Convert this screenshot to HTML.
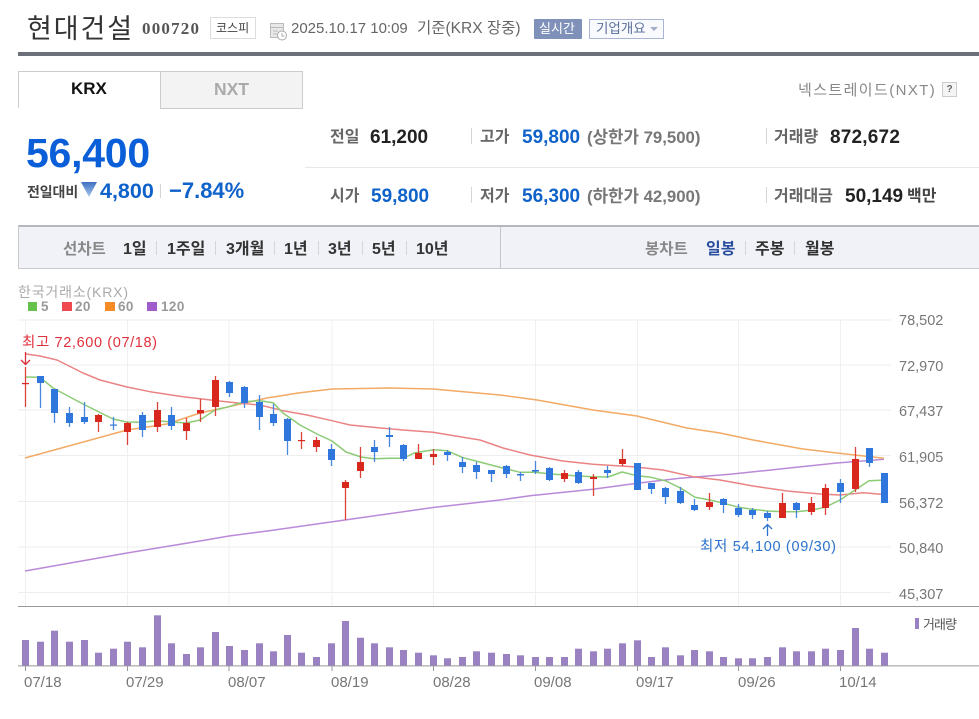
<!DOCTYPE html>
<html lang="ko"><head><meta charset="utf-8"><title>현대건설</title>
<style>
html,body{margin:0;padding:0;background:#fff;}
body{width:979px;height:719px;overflow:hidden;position:relative;font-family:"Liberation Sans","Noto Sans CJK KR",sans-serif;}
.t{position:absolute;white-space:nowrap;line-height:20px;height:20px;filter:blur(.3px);}
.b{font-weight:700;}
.box{position:absolute;box-sizing:border-box;}
.g{color:#666;font-weight:700;font-size:16px;}
.blue{color:#0f62c9;font-weight:700;font-size:19px;}
.dark{color:#222;font-weight:700;font-size:19px;}
.lim{color:#777;font-weight:700;font-size:16.800px;}
.m{color:#333;font-weight:700;font-size:16px;}
.sep{position:absolute;width:1px;background:#d5d5d5;}
</style></head><body>

<span class="t" style="left:27px;top:19px;font-size:27px;color:#333;letter-spacing:1.900px;">현대건설</span>
<span class="t b" style="left:142px;top:19px;font-size:17px;color:#555;letter-spacing:1.200px;font-family:'Liberation Serif','Noto Serif CJK SC',serif;">000720</span>
<div class="box" style="left:210px;top:17px;width:46px;height:22px;border:1px solid #ddd;"></div>
<span class="t" style="left:216px;top:18px;font-size:12px;color:#444;">코스피</span>
<svg style="position:absolute;left:270px;top:23px" width="18" height="18" viewBox="0 0 18 18"><rect x=".5" y=".5" width="13" height="14" fill="#e8e8e8" stroke="#bbb"/><path d="M1 4.500h12M3 8h5M3 11h4" stroke="#bbb"/><circle cx="12" cy="12.500" r="4.500" fill="#fff" stroke="#aaa"/><path d="M12 10v3h2.500" stroke="#aaa" fill="none"/></svg>
<span class="t" style="left:291px;top:19px;font-size:15px;color:#666;">2025.10.17 10:09</span>
<span class="t" style="left:417px;top:19px;font-size:15.500px;color:#666;">기준(KRX 장중)</span>
<div class="box" style="left:534px;top:19px;width:48px;height:20px;background:#8091b9;border-radius:1px;"></div>
<span class="t" style="left:539px;top:19px;font-size:13px;color:#fff;">실시간</span>
<div class="box" style="left:589px;top:19px;width:75px;height:20px;background:#f8fafd;border:1px solid #a9b5d2;"></div>
<span class="t" style="left:596px;top:19px;font-size:13.500px;color:#5a6f9c;">기업개요</span>
<svg style="position:absolute;left:649px;top:26px" width="10" height="6"><path d="M1 1h8L5 5z" fill="#a3aec6"/></svg>

<div class="box" style="left:18px;top:52px;width:961px;height:4px;background:#6c7078;"></div>

<div class="box" style="left:18px;top:71px;width:143px;height:37px;background:#fff;border:1px solid #ccc;border-bottom:0;"></div>
<div class="box" style="left:160px;top:71px;width:143px;height:38px;background:#f3f3f3;border:1px solid #ccc;"></div>
<span class="t b" style="left:71px;top:79px;font-size:17px;color:#111;">KRX</span>
<span class="t b" style="left:214px;top:79px;font-size:17.500px;color:#aaa;">NXT</span>
<span class="t" style="left:798px;top:81px;font-size:15px;color:#888;letter-spacing:1.400px;">넥스트레이드(NXT)</span>
<div class="box" style="left:942px;top:82px;width:15px;height:15px;background:#f4f4f4;border:1px solid #ccc;font:bold 10px/13px 'Liberation Sans',sans-serif;color:#666;text-align:center;">?</div>

<span class="t b" style="left:26px;top:143px;font-size:41px;color:#0a5fd8;letter-spacing:-.25px;">56,400</span>
<span class="t b" style="left:27px;top:182px;font-size:14px;color:#444;letter-spacing:-.1px;">전일대비</span>
<svg style="position:absolute;left:81px;top:181px" width="17" height="17"><defs><linearGradient id="tg" x1="0" y1="0" x2="0" y2="1"><stop offset="0" stop-color="#3f6fc0"/><stop offset="1" stop-color="#a9c8ee"/></linearGradient></defs><path d="M0 1h16L8 16z" fill="url(#tg)"/></svg>
<span class="t b" style="left:100px;top:181px;font-size:21.500px;color:#0f62c9;">4,800</span>
<div class="sep" style="left:160px;top:184px;height:14px;"></div>
<span class="t b" style="left:169px;top:181px;font-size:22px;color:#0f62c9;">−7.84%</span>

<div class="box" style="left:305px;top:167px;width:674px;height:1px;background:#e8e8e8;"></div>
<span class="t g" style="left:330px;top:128px;">전일</span>
<span class="t dark" style="left:370px;top:128px;">61,200</span>
<div class="sep" style="left:471px;top:128px;height:16px;"></div>
<span class="t g" style="left:480px;top:128px;">고가</span>
<span class="t blue" style="left:522px;top:128px;">59,800</span>
<span class="t lim" style="left:587px;top:128px;">(상한가 79,500)</span>
<div class="sep" style="left:766px;top:128px;height:16px;"></div>
<span class="t g" style="left:774px;top:128px;">거래량</span>
<span class="t dark" style="left:830px;top:128px;letter-spacing:.2px;">872,672</span>

<span class="t g" style="left:330px;top:187px;">시가</span>
<span class="t blue" style="left:371px;top:187px;">59,800</span>
<div class="sep" style="left:471px;top:187px;height:16px;"></div>
<span class="t g" style="left:480px;top:187px;">저가</span>
<span class="t blue" style="left:522px;top:187px;">56,300</span>
<span class="t lim" style="left:587px;top:187px;">(하한가 42,900)</span>
<div class="sep" style="left:766px;top:187px;height:16px;"></div>
<span class="t g" style="left:774px;top:187px;">거래대금</span>
<span class="t dark" style="left:845px;top:187px;">50,149</span>
<span class="t g" style="left:907px;top:187px;color:#444;">백만</span>

<div class="box" style="left:18px;top:225px;width:961px;height:44px;background:#f0f2f7;border:1px solid #c8cad0;border-top:2px solid #b4b7be;border-right:0;"></div>
<div class="box" style="left:500px;top:227px;width:1px;height:41px;background:#c4c6cc;"></div>
<span class="t g" style="left:63px;top:240px;color:#888;font-size:15.500px;">선차트</span>
<span class="t m" style="left:123px;top:240px;">1일</span><div class="sep" style="left:156px;top:241px;height:14px;"></div>
<span class="t m" style="left:167px;top:240px;">1주일</span><div class="sep" style="left:215px;top:241px;height:14px;"></div>
<span class="t m" style="left:226px;top:240px;">3개월</span><div class="sep" style="left:274px;top:241px;height:14px;"></div>
<span class="t m" style="left:284px;top:240px;">1년</span><div class="sep" style="left:318px;top:241px;height:14px;"></div>
<span class="t m" style="left:328px;top:240px;">3년</span><div class="sep" style="left:362px;top:241px;height:14px;"></div>
<span class="t m" style="left:372px;top:240px;">5년</span><div class="sep" style="left:406px;top:241px;height:14px;"></div>
<span class="t m" style="left:416px;top:240px;">10년</span>
<span class="t g" style="left:645px;top:240px;color:#888;font-size:15.500px;">봉차트</span>
<span class="t m" style="left:706px;top:240px;color:#2b4f9f;">일봉</span><div class="sep" style="left:745px;top:241px;height:14px;"></div>
<span class="t m" style="left:755px;top:240px;">주봉</span><div class="sep" style="left:794px;top:241px;height:14px;"></div>
<span class="t m" style="left:805px;top:240px;">월봉</span>

<svg style="position:absolute;left:0;top:0;filter:blur(.35px)" width="979" height="719" viewBox="0 0 979 719">
<g font-family="'Liberation Sans','Noto Sans CJK KR',sans-serif">
<text x="18" y="297" font-size="14" fill="#aaa" textLength="110">한국거래소(KRX)</text>
<g font-size="13.500" font-weight="700" fill="#999" letter-spacing=".4">
<rect x="28" y="302" width="9" height="9" fill="#66c24c"/><text x="41" y="311">5</text>
<rect x="62" y="302" width="10" height="9" fill="#ee4a4f"/><text x="75" y="311">20</text>
<rect x="105" y="302" width="10" height="9" fill="#f58b25"/><text x="118" y="311">60</text>
<rect x="147" y="302" width="10" height="9" fill="#a05cc9"/><text x="161" y="311">120</text>
</g>
<path d="M18 320H891M18 365H891M18 410H891M18 455.500H891M18 501.500H891M18 547H891M18 592.500H891" stroke="#eee" fill="none"/>
<path d="M25.500 320V606M127.500 320V606M229 320V606M332 320V606M433.500 320V606M535.500 320V606M637.500 320V606M738.500 320V606M840.500 320V606" stroke="#f0f0f0" fill="none"/>
<g font-size="14.500" fill="#777">
<text x="899" y="325">78,502</text><text x="899" y="371">72,970</text><text x="899" y="416">67,437</text><text x="899" y="462">61,905</text><text x="899" y="508">56,372</text><text x="899" y="553">50,840</text><text x="899" y="599">45,307</text>
</g>
<g fill="none" stroke-width="1.500" stroke-linejoin="round">
<polyline stroke="#ba8ad9" points="25,571 127,553 200,541 229,536 270,530.600 345,520 433,507.500 500,500 530,495.700 593,489.300 637,483.300 680,478.300 730,474.300 787,468.300 837,463 884,459.300"/>
<polyline stroke="#f2aa64" points="25,458 127,430 167,424 200,413 229,406.700 267,398 300,392.700 332,389 390,388 433,389 500,395 537,400 593,410 637,416 687,428 720,433 753,440 803,449 837,453 884,458.300"/>
<polyline stroke="#ea8484" points="26,354 40,356 57,360 83,373 100,380 127,387 150,391.700 183,396.700 217,400.700 240,403.300 260,405 283,410.700 307,415 332,420.700 350,425 373,427.300 403,430 433,432.300 460,436.700 480,440 503,448 530,455 563,461 593,464.300 633,466.700 663,470 693,476.700 720,480 753,486 787,491 820,494 840,495 863,492.700 881,494.300"/>
<polyline stroke="#8ccb76" points="26,377 40,377.300 53,388 83,404 113,419 127,422 142,422.300 157,420.700 171,422 186,423 200,420 215,410 229,406.700 244,401.700 260,400.700 273,402.700 283,413 300,425 317,434 332,441 346,452 361,457 374,458.700 390,458.300 403,458.300 415,452.700 434,449.700 447,450.700 463,457.700 476,461 491,465 507,469 520,472.300 535,472.300 549,473.700 564,475 578,476 593,476.700 608,477 622,472 637,475.700 651,477.300 666,481 681,488.300 695,497.300 710,500 724,503.300 739,507.300 752,509.300 768,511 783,511.700 797,511.700 812,510 825,507.300 840,500 855,490 869,480.700 881,480.300"/>
</g>
<path stroke="#d9443a" stroke-width="1.300" fill="none" d="M25.500 367V407M98.500 414V432M127.500 422V445M157.500 402V432M186.500 418V440M200.500 399V422M215.500 376V416M301.500 432V449M316.500 437V452M345.500 480V520M360.500 447V478M418.500 444V459M433.500 449V465M564.500 470V482M593.500 474V496M622.500 449V466M709.500 493V510M782.500 493V518M811.500 497V515M825.500 484V515M855.500 447V492"/>
<path stroke="#4a86de" stroke-width="1.300" fill="none" d="M40.500 376V408M54.500 389V423M69.500 407V427M84.500 402V424M113.500 417V430M142.500 412V437M171.500 407V430M229.500 381V397M244.500 386V408M259.500 395V430M273.500 404V426M287.500 418V455M331.500 444V466M374.500 440V462M389.500 427V447M403.500 444V461M447.500 450V461M462.500 457V473M476.500 462V479M491.500 470V482M506.500 465V478M520.500 472V481M535.500 461V474M549.500 467V481M578.500 470V484M607.500 466V478M651.500 483V494M665.500 487V504M680.500 487V504M694.500 499V511M723.500 498V513M738.500 504V517M752.500 508V519M767.500 511V521M796.500 502V518M840.500 479V503M869.500 448V467"/>
<g fill="#d8281e">
<rect x="22" y="383" width="7" height="1.200"/><rect x="95" y="415" width="7" height="7"/><rect x="124" y="423" width="7" height="9"/><rect x="154" y="410" width="7" height="17"/><rect x="183" y="423" width="7" height="8"/><rect x="197" y="410" width="7" height="3.500"/><rect x="212" y="380" width="7" height="27"/><rect x="298" y="440" width="7" height="1.200"/><rect x="313" y="440" width="7" height="7"/><rect x="342" y="482" width="7" height="6"/><rect x="357" y="462" width="7" height="9"/><rect x="415" y="453" width="7" height="6"/><rect x="430" y="454" width="7" height="3"/><rect x="561" y="473" width="7" height="6"/><rect x="590" y="477" width="7" height="2"/><rect x="619" y="459" width="7" height="5"/><rect x="706" y="502" width="7" height="5"/><rect x="779" y="503" width="7" height="15"/><rect x="808" y="503" width="7" height="9"/><rect x="822" y="488" width="7" height="20"/><rect x="852" y="459" width="7" height="30"/>
</g>
<g fill="#2f76dd">
<rect x="37" y="376" width="7" height="7"/><rect x="51" y="389" width="7" height="24"/><rect x="66" y="413" width="7" height="10"/><rect x="81" y="417" width="7" height="5"/><rect x="110" y="424.500" width="7" height="1.200"/><rect x="139" y="415" width="7" height="15"/><rect x="168" y="415" width="7" height="11"/><rect x="226" y="382" width="7" height="11"/><rect x="241" y="387" width="7" height="16"/><rect x="256" y="402" width="7" height="15"/><rect x="270" y="414" width="7" height="9"/><rect x="284" y="419" width="7" height="22"/><rect x="328" y="449" width="7" height="11"/><rect x="371" y="447" width="7" height="5"/><rect x="386" y="435" width="7" height="2"/><rect x="400" y="445" width="7" height="14"/><rect x="444" y="452" width="7" height="3"/><rect x="459" y="462" width="7" height="5"/><rect x="473" y="465" width="7" height="7"/><rect x="488" y="470" width="7" height="4"/><rect x="503" y="466" width="7" height="8"/><rect x="517" y="474" width="7" height="1.500"/><rect x="532" y="470" width="7" height="1.500"/><rect x="546" y="468" width="7" height="12"/><rect x="575" y="472" width="7" height="11"/><rect x="604" y="470" width="7" height="3"/><rect x="634" y="463" width="7" height="27"/><rect x="648" y="483" width="7" height="6"/><rect x="662" y="488" width="7" height="9"/><rect x="677" y="491" width="7" height="12"/><rect x="691" y="505" width="7" height="5"/><rect x="720" y="499" width="7" height="6"/><rect x="735" y="508" width="7" height="7"/><rect x="749" y="510" width="7" height="5"/><rect x="764" y="513" width="7" height="5"/><rect x="793" y="503" width="7" height="7"/><rect x="837" y="483" width="7" height="9"/><rect x="866" y="448" width="7" height="15"/><rect x="881" y="473" width="7" height="30"/>
</g>
<text x="22" y="347" font-size="14.500" fill="#e0303c" textLength="135">최고 72,600 (07/18)</text>
<path d="M25.500 352V364M21 360L25.500 364.500L30 360" stroke="#d9303a" stroke-width="1.300" fill="none"/>
<text x="700" y="551" font-size="14.500" fill="#2a72cc" textLength="136">최저 54,100 (09/30)</text>
<path d="M767.500 536V525M763 529L767.500 524.500L772 529" stroke="#2a72cc" stroke-width="1.300" fill="none"/>
<path d="M18 606.500H979" stroke="#999"/>
<path d="M18 665.900H979" stroke="#999"/>
<path d="M25.500 666V671M127.500 666V671M229 666V671M332 666V671M433.500 666V671M535.500 666V671M637.500 666V671M738.500 666V671M840.500 666V671" stroke="#999"/>
<g fill="#9a82c2">
<rect x="22" y="640" width="7" height="25.500"/><rect x="37" y="641.700" width="7" height="23.800"/><rect x="51" y="630.700" width="7" height="34.800"/><rect x="66" y="641.700" width="7" height="23.800"/><rect x="81" y="640" width="7" height="25.500"/><rect x="95" y="652.700" width="7" height="12.800"/><rect x="110" y="648.700" width="7" height="16.800"/><rect x="124" y="641.700" width="7" height="23.800"/><rect x="139" y="647.300" width="7" height="18.200"/><rect x="154" y="615.300" width="7" height="50.200"/><rect x="168" y="643.300" width="7" height="22.200"/><rect x="183" y="654" width="7" height="11.500"/><rect x="197" y="647.300" width="7" height="18.200"/><rect x="212" y="632" width="7" height="33.500"/><rect x="226" y="646" width="7" height="19.500"/><rect x="241" y="650" width="7" height="15.500"/><rect x="256" y="643.300" width="7" height="22.200"/><rect x="270" y="651.300" width="7" height="14.200"/><rect x="284" y="635" width="7" height="30.500"/><rect x="298" y="652.700" width="7" height="12.800"/><rect x="313" y="657" width="7" height="8.500"/><rect x="328" y="643.300" width="7" height="22.200"/><rect x="342" y="621" width="7" height="44.500"/><rect x="357" y="637.700" width="7" height="27.800"/><rect x="371" y="643.300" width="7" height="22.200"/><rect x="386" y="647.300" width="7" height="18.200"/><rect x="400" y="650" width="7" height="15.500"/><rect x="415" y="652.700" width="7" height="12.800"/><rect x="430" y="655.300" width="7" height="10.200"/><rect x="444" y="658.300" width="7" height="7.200"/><rect x="459" y="657" width="7" height="8.500"/><rect x="473" y="651.300" width="7" height="14.200"/><rect x="488" y="652.700" width="7" height="12.800"/><rect x="503" y="654" width="7" height="11.500"/><rect x="517" y="655.300" width="7" height="10.200"/><rect x="532" y="657" width="7" height="8.500"/><rect x="546" y="657" width="7" height="8.500"/><rect x="561" y="657" width="7" height="8.500"/><rect x="575" y="648.700" width="7" height="16.800"/><rect x="590" y="651.300" width="7" height="14.200"/><rect x="604" y="648.700" width="7" height="16.800"/><rect x="619" y="643.300" width="7" height="22.200"/><rect x="634" y="640.300" width="7" height="25.200"/><rect x="648" y="657" width="7" height="8.500"/><rect x="662" y="647.300" width="7" height="18.200"/><rect x="677" y="655.300" width="7" height="10.200"/><rect x="691" y="650" width="7" height="15.500"/><rect x="706" y="651.300" width="7" height="14.200"/><rect x="720" y="657" width="7" height="8.500"/><rect x="735" y="658.300" width="7" height="7.200"/><rect x="749" y="658.300" width="7" height="7.200"/><rect x="764" y="657" width="7" height="8.500"/><rect x="779" y="647.300" width="7" height="18.200"/><rect x="793" y="651.300" width="7" height="14.200"/><rect x="808" y="651.300" width="7" height="14.200"/><rect x="822" y="648.700" width="7" height="16.800"/><rect x="837" y="650" width="7" height="15.500"/><rect x="852" y="628" width="7" height="37.500"/><rect x="866" y="648.700" width="7" height="16.800"/><rect x="881" y="652.700" width="7" height="12.800"/>
<rect x="915" y="618" width="4" height="11"/>
</g>
<text x="923" y="629" font-size="13" fill="#555" textLength="34">거래량</text>
<g font-size="15" fill="#777">
<text x="24" y="687">07/18</text><text x="126" y="687">07/29</text><text x="228" y="687">08/07</text><text x="331" y="687">08/19</text><text x="433" y="687">08/28</text><text x="534" y="687">09/08</text><text x="636" y="687">09/17</text><text x="738" y="687">09/26</text><text x="839" y="687">10/14</text>
</g>
</g>
</svg>
</body></html>
